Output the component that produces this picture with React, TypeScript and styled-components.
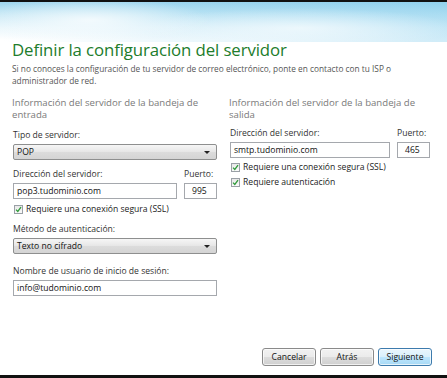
import React from "react";
import styled, { createGlobalStyle } from "styled-components";

const Global = createGlobalStyle`
  html, body { margin: 0; padding: 0; background: #fff; }
  body { font-family: "Open Sans", "Noto Sans", sans-serif; }
`;

const Page = styled.div`
  position: relative;
  width: 447px;
  height: 378px;
  overflow: hidden;
  background:
    radial-gradient(ellipse 120px 22px at 90px 18px, rgba(255,255,255,0.75), rgba(255,255,255,0) 100%),
    radial-gradient(ellipse 160px 20px at 300px 26px, rgba(255,255,255,0.6), rgba(255,255,255,0) 100%),
    linear-gradient(to right, rgba(170,220,240,0.0), rgba(120,200,235,0.35)),
    linear-gradient(to bottom, #9fd6ee 0px, #c4e7f5 12px, #eaf7fc 26px, #ffffff 38px, #ffffff 100%);
  background-size: 100% 40px, 100% 40px, 100% 40px, 100% 100%;
  background-repeat: no-repeat;
  display: flex;
  flex-direction: column;
  border-top: 2px solid #111;
  border-bottom: 3px solid #111;
  box-sizing: border-box;
`;

const Header = styled.div`
  padding: 37px 12px 0 12px;
`;

const Title = styled.h1`
  margin: 0;
  font-family: "Open Sans", sans-serif;
  font-weight: 400;
  font-size: 16.8px;
  line-height: 22px;
  color: #217c2b;
  letter-spacing: -0.1px;
`;

const Subtitle = styled.p`
  margin: 2px 0 0 0;
  font-family: "Open Sans", sans-serif;
  font-size: 8.3px;
  line-height: 12px;
  color: #555;
  width: 410px;
`;

const Columns = styled.div`
  display: grid;
  grid-template-columns: 204px 200px;
  column-gap: 13px;
  padding: 10px 0 0 13px;
`;

const Column = styled.div`
  display: flex;
  flex-direction: column;
`;

const SectionTitle = styled.div`
  font-size: 9.6px;
  line-height: 12px;
  color: #7a7a7a;
  margin-left: -1px;
  margin-bottom: 7px;
`;

const Label = styled.div<{ $top?: number }>`
  font-size: 8.6px;
  line-height: 11px;
  color: #333;
  margin-top: ${(p) => p.$top ?? 0}px;
  margin-bottom: 3px;
`;

const Row = styled.div`
  display: flex;
  gap: 7px;
  align-items: flex-end;
`;

const Field = styled.div<{ $w?: number }>`
  display: flex;
  flex-direction: column;
  ${(p) => (p.$w ? `width: ${p.$w}px; flex: none;` : "flex: 1;")}
`;

const Select = styled.div`
  box-sizing: border-box;
  height: 16px;
  border: 1px solid #8e8f8f;
  border-radius: 2px;
  background: linear-gradient(to bottom, #f6f6f6, #e6e6e6 50%, #dcdcdc 51%, #d4d4d4);
  display: flex;
  align-items: center;
  justify-content: space-between;
  padding: 0 6px 0 3px;
  font-size: 8.6px;
  color: #111;
`;

const Arrow = styled.span`
  width: 0;
  height: 0;
  border-left: 3px solid transparent;
  border-right: 3px solid transparent;
  border-top: 3px solid #222;
`;

const Input = styled.div<{ $center?: boolean }>`
  box-sizing: border-box;
  height: 16px;
  border: 1px solid #a5a8ad;
  background: #fff;
  display: flex;
  align-items: center;
  padding: 0 3px;
  font-size: 8.6px;
  color: #111;
  ${(p) => (p.$center ? "padding-left: 7px;" : "")}
`;

const Check = styled.div<{ $top?: number }>`
  display: flex;
  align-items: center;
  gap: 3px;
  margin-top: ${(p) => p.$top ?? 4}px;
  margin-left: 1px;
  font-size: 8.6px;
  color: #222;
  line-height: 11px;
`;

const Box = styled.span`
  box-sizing: border-box;
  width: 9px;
  height: 9px;
  border: 1px solid #9aa0a6;
  background: linear-gradient(#e8e8e8, #fafafa);
  display: inline-flex;
  align-items: center;
  justify-content: center;
`;

const Footer = styled.div`
  margin-top: auto;
  display: flex;
  justify-content: flex-end;
  gap: 4px;
  padding: 0 15px 9px 0;
`;

const Button = styled.div<{ $primary?: boolean }>`
  box-sizing: border-box;
  width: 54px;
  height: 18px;
  border-radius: 3px;
  border: 1px solid ${(p) => (p.$primary ? "#3d7bad" : "#8a8a8a")};
  background: ${(p) =>
    p.$primary
      ? "linear-gradient(#eaf6fd, #d9f0fc 50%, #bee6fd 51%, #a7d9f5)"
      : "linear-gradient(#f2f2f2, #ebebeb 50%, #dddddd 51%, #cfcfcf)"};
  box-shadow: inset 0 0 0 1px rgba(255,255,255,0.7);
  display: flex;
  align-items: center;
  justify-content: center;
  font-size: 8.6px;
  color: #111;
`;

const CheckBox = () => (
  <Box>
    <svg width="7" height="7" viewBox="0 0 7 7">
      <path d="M1 3.6 L2.8 5.4 L6 1.2" fill="none" stroke="#2f9a3a" strokeWidth="1.3" />
    </svg>
  </Box>
);

export default function App() {
  return (
    <>
      <Global />
      <Page>
        <Header>
          <Title>Definir la configuración del servidor</Title>
          <Subtitle>
            Si no conoces la configuración de tu servidor de correo electrónico, ponte en contacto con tu ISP o
            administrador de red.
          </Subtitle>
        </Header>
        <Columns>
          <Column>
            <SectionTitle>
              Información del servidor de la bandeja de
              <br />
              entrada
            </SectionTitle>
            <Label $top={2}>Tipo de servidor:</Label>
            <Select>
              <span>POP</span>
              <Arrow />
            </Select>
            <Row>
              <Field>
                <Label $top={9}>Dirección del servidor:</Label>
                <Input>pop3.tudominio.com</Input>
              </Field>
              <Field $w={33}>
                <Label $top={9}>Puerto:</Label>
                <Input $center>995</Input>
              </Field>
            </Row>
            <Check $top={5}>
              <CheckBox />
              Requiere una conexión segura (SSL)
            </Check>
            <Label $top={9}>Método de autenticación:</Label>
            <Select>
              <span>Texto no cifrado</span>
              <Arrow />
            </Select>
            <Label $top={12}>Nombre de usuario de inicio de sesión:</Label>
            <Input>info@tudominio.com</Input>
          </Column>
          <Column>
            <SectionTitle>
              Información del servidor de la bandeja de
              <br />
              salida
            </SectionTitle>
            <Row>
              <Field>
                <Label>Dirección del servidor:</Label>
                <Input>smtp.tudominio.com</Input>
              </Field>
              <Field $w={33}>
                <Label>Puerto:</Label>
                <Input $center>465</Input>
              </Field>
            </Row>
            <Check $top={4}>
              <CheckBox />
              Requiere una conexión segura (SSL)
            </Check>
            <Check $top={4}>
              <CheckBox />
              Requiere autenticación
            </Check>
          </Column>
        </Columns>
        <Footer>
          <Button>Cancelar</Button>
          <Button>Atrás</Button>
          <Button $primary>Siguiente</Button>
        </Footer>
      </Page>
    </>
  );
}
